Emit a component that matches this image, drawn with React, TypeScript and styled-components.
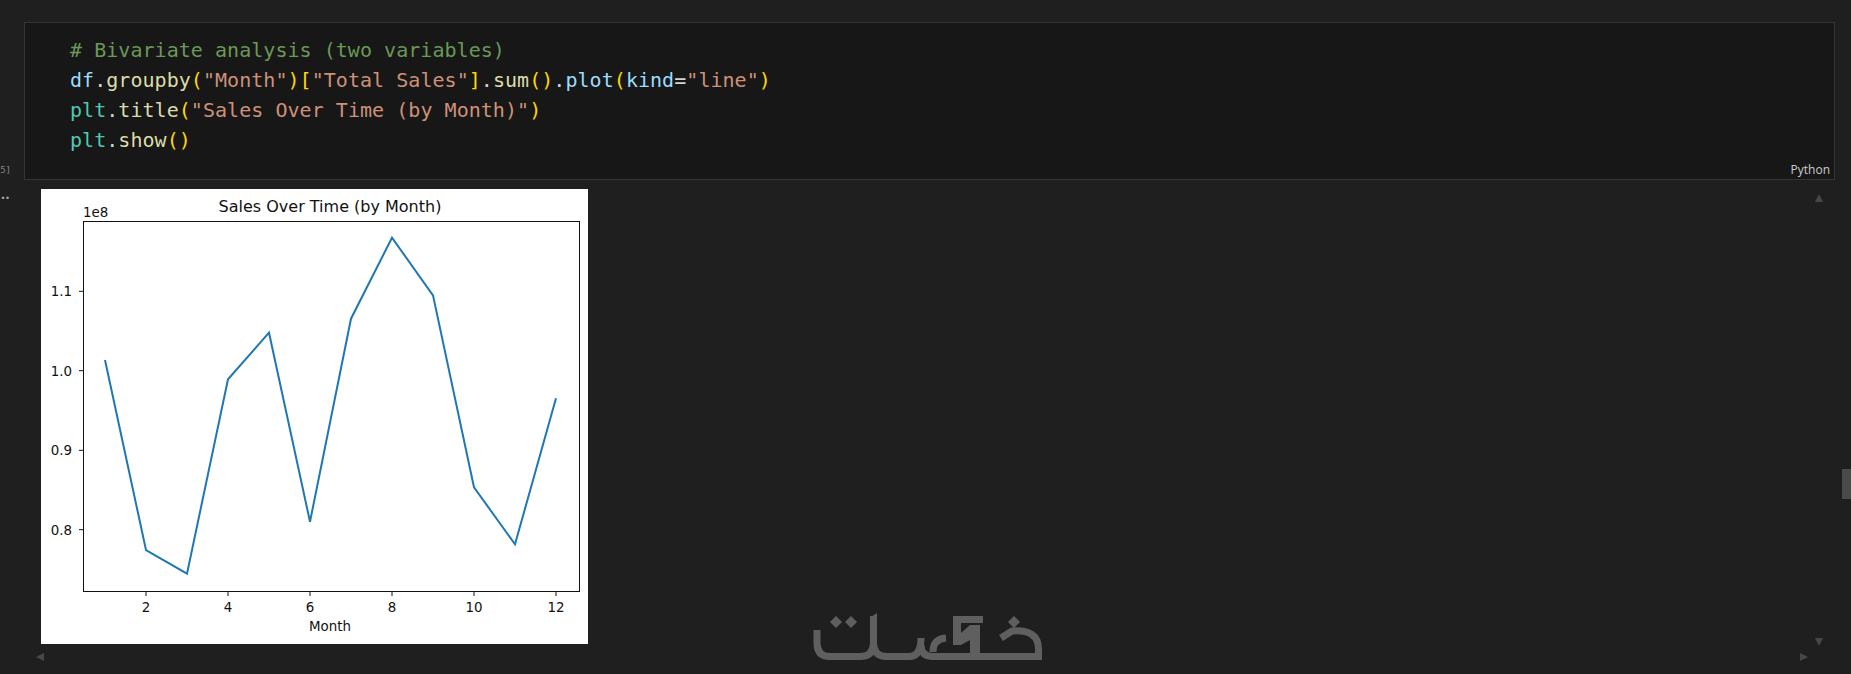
import { FunctionComponent } from "react";
import styled, { createGlobalStyle } from "styled-components";

const SALES_Y = [171, 361, 384.7, 190.3, 143.7, 332.7, 129.7, 48.7, 106.3, 298.3, 355.3, 209.3];
const Y_TICKS = [
  { label: "1.1", y: 102.3 },
  { label: "1.0", y: 181.7 },
  { label: "0.9", y: 261.3 },
  { label: "0.8", y: 340.7 },
];
const X_TICKS = [2, 4, 6, 8, 10, 12];
const AXES = { left: 42.5, right: 538.5, top: 32.5, bottom: 402.5 };

const monthX = (month: number) => 64 + (month - 1) * 41;

const GlobalStyle = createGlobalStyle`
  html, body {
    margin: 0;
    padding: 0;
    background: #1f1f1f;
    overflow: hidden;
  }
`;

const Page = styled.div`
  position: relative;
  height: 674px;
  padding-top: 22px;
  box-sizing: border-box;
  background: #1f1f1f;
  overflow: hidden;
  font-family: "Open Sans", "Liberation Sans", sans-serif;
`;

const CodeRow = styled.div`
  display: flex;
  align-items: flex-end;
  padding-right: 16px;
`;

const ExecCount = styled.div`
  width: 24px;
  flex: none;
  box-sizing: border-box;
  display: flex;
  justify-content: flex-end;
  padding: 0 13px 3px 0;
  overflow: hidden;
  font-family: "DejaVu Sans Mono", monospace;
  font-size: 9px;
  line-height: 14px;
  color: #858585;
  white-space: nowrap;
`;

const CodeCell = styled.section`
  flex: 1;
  height: 158px;
  box-sizing: border-box;
  display: flex;
  flex-direction: column;
  background: #171717;
  border: 1px solid #353535;
`;

const CodeLines = styled.pre`
  margin: 0;
  padding: 12px 0 0 45px;
  font-family: "DejaVu Sans Mono", monospace;
  font-size: 20px;
  line-height: 30px;
  letter-spacing: 0.04px;
  color: #d4d4d4;
`;

const Token = styled.span<{ $color: string }>`
  color: ${(p) => p.$color};
`;

const Language = styled.div`
  align-self: flex-end;
  margin: 7px 4px 0 0;
  font-size: 12px;
  line-height: 16px;
  color: #cccccc;
`;

const OutputRow = styled.div`
  display: flex;
  margin-top: 9px;
`;

const OutputGutter = styled.div`
  width: 41px;
  flex: none;
  padding: 0 0 0 1px;
  box-sizing: border-box;
  font-size: 14px;
  font-weight: 700;
  line-height: 10px;
  letter-spacing: 0.5px;
  color: #a8a8a8;
`;

const ChartPanel = styled.figure`
  margin: 0;
  width: 547px;
  height: 455px;
  background: #ffffff;
`;

const ChartSvg = styled.svg`
  display: block;
  width: 100%;
  height: 100%;
  font-family: "DejaVu Sans", sans-serif;
`;

const ChartText = styled.text<{ $size?: number }>`
  font-size: ${(p) => p.$size ?? 13.4}px;
  fill: #111111;
`;

const Watermark = styled.svg`
  position: absolute;
  left: 805px;
  top: 605px;
  width: 245px;
  height: 60px;
`;

const ScrollThumb = styled.div`
  position: absolute;
  right: 0;
  top: 469px;
  width: 9px;
  height: 30px;
  background: #4a4a4a;
`;

const ARROW_SHAPES = {
  up: "polygon(50% 0, 100% 100%, 0 100%)",
  down: "polygon(0 0, 100% 0, 50% 100%)",
  left: "polygon(100% 0, 100% 100%, 0 50%)",
  right: "polygon(0 0, 100% 50%, 0 100%)",
};

const ScrollArrow = styled.div<{ $dir: keyof typeof ARROW_SHAPES; $x: number; $y: number }>`
  position: absolute;
  left: ${(p) => p.$x - 4}px;
  top: ${(p) => p.$y - 4}px;
  width: 8px;
  height: 8px;
  background: #474747;
  clip-path: ${(p) => ARROW_SHAPES[p.$dir]};
`;

const COMMENT = "#6a9955";
const VARIABLE = "#9cdcfe";
const METHOD = "#dcdcaa";
const BRACKET = "#ffd700";
const STRING = "#ce9178";
const MODULE = "#4ec9b0";

const Code: FunctionComponent = () => (
  <CodeLines>
    <Token $color={COMMENT}># Bivariate analysis (two variables)</Token>
    {"\n"}
    <Token $color={VARIABLE}>df</Token>.<Token $color={METHOD}>groupby</Token>
    <Token $color={BRACKET}>(</Token>
    <Token $color={STRING}>"Month"</Token>
    <Token $color={BRACKET}>)[</Token>
    <Token $color={STRING}>"Total Sales"</Token>
    <Token $color={BRACKET}>]</Token>.<Token $color={METHOD}>sum</Token>
    <Token $color={BRACKET}>()</Token>.<Token $color={VARIABLE}>plot</Token>
    <Token $color={BRACKET}>(</Token>
    <Token $color={VARIABLE}>kind</Token>=<Token $color={STRING}>"line"</Token>
    <Token $color={BRACKET}>)</Token>
    {"\n"}
    <Token $color={MODULE}>plt</Token>.<Token $color={METHOD}>title</Token>
    <Token $color={BRACKET}>(</Token>
    <Token $color={STRING}>"Sales Over Time (by Month)"</Token>
    <Token $color={BRACKET}>)</Token>
    {"\n"}
    <Token $color={MODULE}>plt</Token>.<Token $color={METHOD}>show</Token>
    <Token $color={BRACKET}>()</Token>
  </CodeLines>
);

const SalesChart: FunctionComponent = () => (
  <ChartPanel>
    <ChartSvg viewBox="0 0 547 455">
      <ChartText x={289} y={23} textAnchor="middle" $size={16}>
        Sales Over Time (by Month)
      </ChartText>
      <ChartText x={42} y={28}>
        1e8
      </ChartText>
      <rect
        x={AXES.left}
        y={AXES.top}
        width={AXES.right - AXES.left}
        height={AXES.bottom - AXES.top}
        fill="none"
        stroke="#111111"
        strokeWidth="1"
      />
      {Y_TICKS.map((tick) => (
        <g key={tick.label}>
          <line x1={AXES.left - 4.5} x2={AXES.left} y1={tick.y} y2={tick.y} stroke="#111111" />
          <ChartText x={31} y={tick.y + 5} textAnchor="end">
            {tick.label}
          </ChartText>
        </g>
      ))}
      {X_TICKS.map((month) => (
        <g key={month}>
          <line
            x1={monthX(month)}
            x2={monthX(month)}
            y1={AXES.bottom}
            y2={AXES.bottom + 4.5}
            stroke="#111111"
          />
          <ChartText x={monthX(month)} y={423} textAnchor="middle">
            {month}
          </ChartText>
        </g>
      ))}
      <ChartText x={289} y={442} textAnchor="middle">
        Month
      </ChartText>
      <polyline
        points={SALES_Y.map((y, i) => `${monthX(i + 1)},${y}`).join(" ")}
        fill="none"
        stroke="#1f77b4"
        strokeWidth="2"
      />
    </ChartSvg>
  </ChartPanel>
);

// logo drawn in page pixels minus the (805,605) corner of the mark
const Logo: FunctionComponent = () => (
  <Watermark viewBox="0 0 245 60">
    <g fill="none" stroke="#5f5f5f" strokeWidth="7">
      <path d="M12 25V38Q12 51.5 25 51.5H55Q68.500 51.500 68.500 38V11" />
      <path d="M68.500 38Q68.500 51.500 82 51.500H104Q116 51.500 116 33" />
      <path d="M116 40Q116 51.500 128 51.500H236" />
      <path d="M128 47Q128 34 141 33" />
      <path d="M196 33L207 26Q233.500 24 233.500 44V55" />
    </g>
    <g fill="#5f5f5f">
      <path d="M31 11L37 17L31 23L25 17Z" />
      <path d="M46 11L52 17L46 23L40 17Z" />
      <path d="M209 11L215 17L209 23L203 17Z" />
      <path d="M148 11H178V18H156V28L165 20H175V55H165V35L156 40H148Z" />
      <path d="M66 12L72 8V20H66Z" />
    </g>
  </Watermark>
);

const App: FunctionComponent = () => (
  <Page>
    <GlobalStyle />
    <CodeRow>
      <ExecCount>[45]</ExecCount>
      <CodeCell>
        <Code />
        <Language>Python</Language>
      </CodeCell>
    </CodeRow>
    <OutputRow>
      <OutputGutter>..</OutputGutter>
      <SalesChart />
    </OutputRow>
    <Logo />
    <ScrollThumb />
    <ScrollArrow $dir="up" $x={1819} $y={198} />
    <ScrollArrow $dir="down" $x={1819} $y={642} />
    <ScrollArrow $dir="left" $x={40} $y={657} />
    <ScrollArrow $dir="right" $x={1804} $y={657} />
  </Page>
);

export default App;
